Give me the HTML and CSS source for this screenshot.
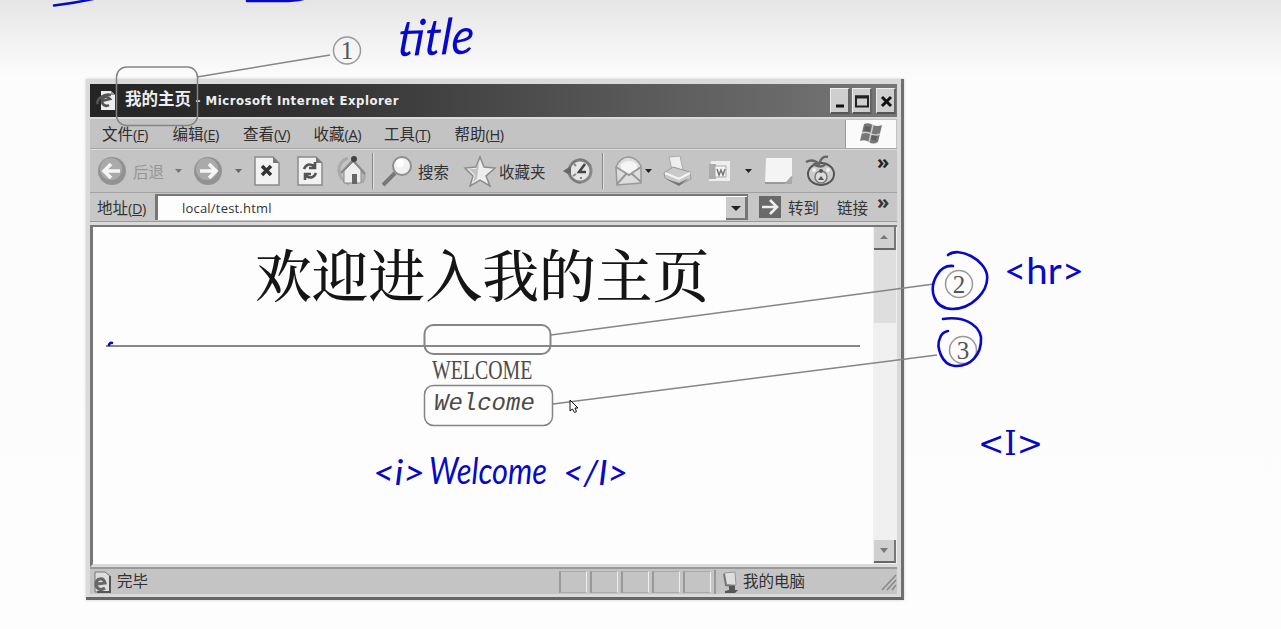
FILE: index.html
```html
<!DOCTYPE html>
<html lang="zh-CN">
<head>
<meta charset="utf-8">
<title>我的主页</title>
<link rel="stylesheet" href="styles.css">
</head>
<body>
<main class="slide">
  <section class="window">
    <header class="titlebar">
      <svg class="ie" width="21" height="21" viewBox="0 0 21 21"><path d="M5 1h10l4 4v15H5z" fill="#eee"/><path d="M15 1v4h4" fill="#999"/><path d="M13 15c-3 2-7 0-7-4s5-6 8-2l-8 2M2 14C-1 10 8 3 15 5" fill="none" stroke="#555" stroke-width="2.6"/></svg>
      <h1 class="title"><b>我的主页</b> - Microsoft Internet Explorer</h1>
      <div class="controls">
        <span class="ctl"><svg width="18" height="24"><path d="M5 17h8" stroke="#111" stroke-width="3"/></svg></span>
        <span class="ctl"><svg width="18" height="24"><path d="M3 7.500h12v10H3z" fill="none" stroke="#222" stroke-width="2"/><path d="M2 8h14" stroke="#222" stroke-width="3"/></svg></span>
        <span class="ctl close"><svg width="18" height="24"><path d="M5 8l9 9M14 8l-9 9" stroke="#111" stroke-width="3"/></svg></span>
      </div>
    </header>
    <nav class="menubar">
      <span>文件<i>(<u>F</u>)</i></span><span>编辑<i>(<u>E</u>)</i></span><span>查看<i>(<u>V</u>)</i></span><span>收藏<i>(<u>A</u>)</i></span><span>工具<i>(<u>T</u>)</i></span><span>帮助<i>(<u>H</u>)</i></span>
      <div class="brand"><svg width="26" height="24" viewBox="0 0 26 24"><path d="M6 2q5-2 9 1 4 2 9 0l-4 17q-5 3-9 0-4-3-9-1z" fill="#777"/><path d="M15 3l-4 17M4 11q5-2 9 1 4 2 9 0" stroke="#ccc" stroke-width="1.500" fill="none"/><path d="M7 4l6 1-1 5-6-1zM14 13l5 1-1 5-5-2z" fill="#555" opacity=".7"/></svg></div>
    </nav>
    <div class="toolbar">
      <svg width="30" height="32" viewBox="0 0 30 32"><circle cx="15" cy="16" r="14" fill="#929292"/><circle cx="14" cy="14" r="11" fill="#aaa"/><path d="M23 16H8M14 9l-7 7 7 7" fill="none" stroke="#f5f5f5" stroke-width="3.500"/></svg>
      <span class="off">后退</span>
      <svg width="8" height="8"><path d="M0 2h7L3.500 6z" fill="#777"/></svg>
      <svg width="30" height="32" viewBox="0 0 30 32"><circle cx="15" cy="16" r="14" fill="#929292"/><circle cx="14" cy="14" r="11" fill="#aaa"/><path d="M7 16h15M16 9l7 7-7 7" fill="none" stroke="#f5f5f5" stroke-width="3.500"/></svg>
      <svg width="8" height="8"><path d="M0 2h7L3.500 6z" fill="#666"/></svg>
      <svg width="26" height="30" viewBox="0 0 26 30"><path d="M1 1h18l6 6v22H1z" fill="#f2f2f2" stroke="#8a8a8a" stroke-width="1.500"/><path d="M19 1v6h6z" fill="#777"/><path d="M8 10l9 9M17 10l-9 9" stroke="#333" stroke-width="3.500"/></svg>
      <svg width="26" height="30" viewBox="0 0 26 30"><path d="M1 1h18l6 6v22H1z" fill="#f2f2f2" stroke="#8a8a8a" stroke-width="1.500"/><path d="M19 1v6h6z" fill="#777"/><path d="M7 13q3-7 10-3M18 6v6h-6M19 17q-3 7-10 3M8 24v-6h6" fill="none" stroke="#555" stroke-width="2.600"/></svg>
      <svg width="32" height="32" viewBox="0 0 32 32"><path d="M12 3Q2 7 3 17q2 9 10 12M25 15q6 5 1 13" fill="none" stroke="#aaa" stroke-width="3"/><path d="M8 16v12h17V14L17 7z" fill="#eee" stroke="#888"/><path d="M5 18L17 5l12 14" fill="none" stroke="#888" stroke-width="2"/><path d="M16 19h5v10h-5z" fill="#666"/><circle cx="18" cy="4" r="3" fill="#444"/></svg>
      <i class="sep"></i>
      <svg width="32" height="32" viewBox="0 0 32 32"><path d="M13 18L1 30" stroke="#777" stroke-width="4"/><circle cx="20" cy="11" r="9" fill="#f1f1f1" stroke="#8e8e8e" stroke-width="2"/><circle cx="18" cy="8" r="4" fill="#fff"/></svg>
      <span>搜索</span>
      <svg width="34" height="32" viewBox="0 0 34 32"><path d="M17 2l4 10 11 1-9 8 4 10-10-6-10 6 3-10-8-8 11-1z" fill="#eee" stroke="#8c8c8c" stroke-width="1.500"/><path d="M16 8l-3 6-7 0 6 6-2 7 4-3 1-8z" fill="#c2c2c2"/></svg>
      <span>收藏夹</span>
      <svg width="32" height="30" viewBox="0 0 32 30"><circle cx="18" cy="15" r="11" fill="#e5e5e5" stroke="#888" stroke-width="3"/><path d="M1 15l8-5v10z" fill="#666"/><path d="M9 9q10-12 20 1M7 17q4 10 12 10" fill="none" stroke="#777" stroke-width="1.500"/><path d="M23 8l-6 8h7" fill="none" stroke="#444" stroke-width="2.500"/><path d="M12 8l2 2M11 20l3-2M19 23v-2" stroke="#888" stroke-width="2"/></svg>
      <i class="sep"></i>
      <svg width="30" height="32" viewBox="0 0 30 32"><path d="M2 12Q6 2 15 2q8 1 12 9v17L3 30z" fill="#ddd" stroke="#999" stroke-width="1.500"/><path d="M7 9q8-6 16 0v8l-8 3-8-3z" fill="#f5f5f5"/><path d="M2 12l13 8 12-8M3 29l10-11M27 27L17 18" fill="none" stroke="#999" stroke-width="2"/></svg>
      <svg width="8" height="8"><path d="M0 2h7L3.500 6z" fill="#222"/></svg>
      <svg width="30" height="32" viewBox="0 0 30 32"><path d="M6 2l11-1 3 14H9z" fill="#eee" stroke="#aaa"/><path d="M1 18l9-6 17 5 1 7-12 6L2 23z" fill="#c9c9c9" stroke="#999"/><path d="M2 18l14 6 11-6" fill="none" stroke="#f5f5f5" stroke-width="2"/><path d="M3 24l13 4 10-5-10 8z" fill="#777"/></svg>
      <svg width="24" height="24" viewBox="0 0 24 24"><path d="M4 2h19v20H2z" fill="#eee"/><path d="M2 5h7v15H2z" fill="#aaa"/><path d="M8 7h11v11H8z" fill="#f6f6f6" stroke="#aaa"/><path d="M10 10l2 6 2-5 2 5 2-6" fill="none" stroke="#777" stroke-width="1.500"/></svg>
      <svg width="8" height="8"><path d="M0 2h7L3.500 6z" fill="#222"/></svg>
      <svg width="30" height="30" viewBox="0 0 30 30"><path d="M2 2h26v20l-5 6H1z" fill="#f4f4f4"/><path d="M1 27h22l5-6" fill="none" stroke="#999" stroke-width="2"/><path d="M28 20v8h-8z" fill="#aaa"/></svg>
      <svg width="32" height="32" viewBox="0 0 32 32"><ellipse cx="17" cy="19" rx="13" ry="11" fill="#ccc" stroke="#555" stroke-width="2"/><path d="M2 7q7-4 13 2 3-9 9-7M9 9q8 5 13 0" fill="none" stroke="#666" stroke-width="2.400"/><circle cx="17" cy="22" r="6" fill="#ddd" stroke="#777" stroke-width="1.500"/><circle cx="17" cy="16" r="2" fill="#555"/><path d="M14 25l3-4 3 4z" fill="#555"/><circle cx="10" cy="15" r="2" fill="#eee"/><circle cx="24" cy="15" r="2" fill="#eee"/></svg>
      <b class="more">»</b>
    </div>
    <div class="address">
      <label class="addr-label">地址<i>(<u>D</u>)</i></label>
      <div class="addr-field"><span>local/test.html</span><span class="drop"><svg width="20" height="22"><path d="M5 9h10l-5 5z" fill="#222"/></svg></span></div>
      <svg class="go" width="22" height="22" viewBox="0 0 22 22"><path d="M0 0h22v22H0z" fill="#696969"/><path d="M3 11h15M11 4l7 7-7 7" fill="none" stroke="#eee" stroke-width="2.600"/></svg>
      <span class="go-text">转到</span>
      <span class="links">链接</span>
      <b class="more2">»</b>
    </div>
    <div class="viewport">
      <article class="page">
        <h2>欢迎进入我的主页</h2>
        <hr>
        <p class="upper"><span>WELCOME</span></p>
        <p class="lower"><i>Welcome</i></p>
      </article>
      <aside class="scroll">
        <span class="sb"><svg width="20" height="20"><path d="M6 12h8l-4-4z" fill="#777"/></svg></span>
        <span class="thumb"></span>
        <span class="sb"><svg width="20" height="20"><path d="M6 8h8l-4 5z" fill="#777"/></svg></span>
      </aside>
    </div>
    <footer class="status">
      <div class="done"><svg width="22" height="24" viewBox="0 0 22 24"><path d="M5 2h10l5 4v16H5z" fill="#ddd" stroke="#777"/><path d="M20 6v16H7" fill="none" stroke="#555" stroke-width="2"/><path d="M15 18c-4 3-9 1-9-4s7-8 9-1l-8 1" fill="none" stroke="#666" stroke-width="3"/></svg><span>完毕</span></div>
      <i></i><i></i><i></i><i></i><i></i>
      <div class="zone"><svg width="18" height="24" viewBox="0 0 18 24"><path d="M3 3l11-1 1 13-10 1z" fill="#ddd" stroke="#999"/><path d="M3 4l2 11 9 1" fill="none" stroke="#777" stroke-width="2"/><path d="M8 16h6v4h3l-3 3H4v-2l4-1z" fill="#555"/></svg><span>我的电脑</span></div>
      <svg class="grip" width="16" height="18"><path d="M1 17L15 2M6 17l9-10M11 17l4-5" stroke="#888" stroke-width="1.500"/></svg>
    </footer>
  </section>

  <svg class="marks" width="1281" height="629" viewBox="0 0 1281 629">
    <g fill="none" stroke="#858585" stroke-width="1.500">
      <rect x="116.500" y="67" width="81" height="58.500" rx="10"/>
      <path d="M197 77L330 55"/>
      <rect x="424.500" y="325" width="126" height="29" rx="9" stroke-width="2"/>
      <path d="M551 335L934 284"/>
      <rect x="424.500" y="385.500" width="128" height="40" rx="9"/>
      <path d="M553 404L937 355"/>
    </g>
    <g fill="none" stroke="#999" stroke-width="1.500"><circle cx="347" cy="50.500" r="13.500"/><circle cx="959" cy="284" r="13.500"/><circle cx="963" cy="350" r="13.500"/></g>
    <g class="num"><text x="347" y="59">1</text><text x="959" y="292.500">2</text><text x="963" y="358.500">3</text></g>
    <g fill="none" stroke="#0808c8" stroke-width="2.600" stroke-linecap="round">
      <path d="M54 5.500Q75 3 93-1M247 1h35Q295 1 303-1"/>
      <path d="M948 255C959 246 985 260 987 275C989 291 972 309 952 309C932 308 929 288 937 275Q943 265 953 266"/>
      <path d="M943 319C962 316 978 323 981 337C982 355 970 367 955 366C941 365 936 346 940 338Q942 332 948 331"/>
      <path d="M109 345q1-3 3-2"/>
    </g>
    <g class="ink">
      <text x="0" y="0" textLength="76" lengthAdjust="spacingAndGlyphs" transform="translate(397 56) rotate(-2) skewX(-6)" font-size="50">title</text>
      <text class="upright" x="1004" y="284" textLength="80" lengthAdjust="spacingAndGlyphs" font-size="37">&lt;hr&gt;</text>
      <text class="serif" x="978" y="455" textLength="65" lengthAdjust="spacingAndGlyphs" font-size="34">&lt;I&gt;</text>
      <text x="373" y="485" textLength="52" lengthAdjust="spacingAndGlyphs" font-size="34">&lt;i&gt;</text>
      <text x="0" y="0" textLength="118" lengthAdjust="spacingAndGlyphs" transform="translate(429 484)" font-size="37">Welcome</text>
      <text x="563" y="485" textLength="65" lengthAdjust="spacingAndGlyphs" font-size="35">&lt;/I&gt;</text>
    </g>
    <path d="M570 400v11l2.500-2 2 3.500 2-1-1.500-3.500h3z" fill="#fff" stroke="#111"/>
  </svg>
</main>
</body>
</html>
```

FILE: styles.css
```css
* { box-sizing: border-box; }
body { margin: 0; overflow: hidden; font-family: "Open Sans", "Noto Sans CJK SC", sans-serif; }
.slide { position: relative; width: 1281px; height: 629px; padding: 79px 0 0 86px; background: linear-gradient(#e5e5e5 0, #efefef 30px, #fcfcfc 78px, #fdfdfd 100%); }
.slide svg { display: block; flex: none; }
.window { display: flex; flex-direction: column; width: 818px; height: 521px; padding: 5px 4px 0 4px; background: #dadada; border-right: 3px solid #707070; border-bottom: 3px solid #666; box-shadow: 0 0 3px #ccc; }
.titlebar { display: flex; align-items: center; height: 33px; padding-left: 6px; background: linear-gradient(90deg, #242424, #303030 25%, #525252 60%, #777); color: #eee; }
.title { flex: 1; margin: 0 0 0 8px; font: 700 13px/33px "DejaVu Sans Condensed", "DejaVu Sans", "Noto Sans CJK SC", sans-serif; font-stretch: condensed; letter-spacing: .52px; white-space: nowrap; }
.title b { font: 700 16.500px "Noto Sans CJK SC", sans-serif; letter-spacing: 0; }
.controls { display: flex; gap: 2px; padding-right: 1px; }
.ctl { width: 20px; height: 26px; background: #cecece; border: 1px solid #eee; border-right: 2px solid #666; border-bottom: 2px solid #555; }
.ctl.close { margin-left: 2px; }
.menubar { display: flex; height: 32px; padding-left: 12px; background: #c3c3c3; border-top: 2px solid #dadada; border-bottom: 1px solid #a5a5a5; font-size: 15.500px; line-height: 31px; color: #2e2e2e; }
.menubar > span { width: 70.500px; white-space: nowrap; }
.menubar i, .address i { font: 14.500px "Open Sans", sans-serif; letter-spacing: -.4px; }
.brand { display: flex; align-items: center; justify-content: center; width: 51px; margin: 1px 1px 0 auto; background: #fafafa; border-left: 1px solid #999; }
.toolbar { display: grid; align-items: center; height: 44px; grid-template-columns: 36px 42px 18px 42px 19px 43px 39px 36px 10px 36px 45px 36px 63px 40px 12px 31px 18px 44px 38px 19px 40px 73px 18px; padding-left: 7px; background: #c4c4c4; border-top: 1px solid #dedede; border-bottom: 1px solid #a2a2a2; font-size: 15.500px; color: #333; white-space: nowrap; }
.toolbar .off { color: #969696; }
.sep { width: 2px; height: 36px; border-left: 1px solid #888; border-right: 1px solid #e1e1e1; }
.more { margin-top: -18px; font-size: 20px; line-height: 24px; color: #222; }
.address { display: flex; align-items: center; height: 29px; padding-left: 7px; background: #c7c7c7; border-bottom: 1px solid #999; font-size: 15.500px; color: #333; white-space: nowrap; }
.addr-label { width: 58px; }
.addr-field { display: flex; align-items: center; justify-content: space-between; width: 593px; height: 26px; padding-left: 24px; background: #fdfdfd; border: 2px solid #777; border-bottom: 0; border-right-width: 1px; border-left-width: 3px; font: 13px "Open Sans", sans-serif; letter-spacing: .2px; }
.drop { width: 21px; height: 23px; background: #cbcbcb; border-right: 2px solid #777; border-bottom: 2px solid #777; }
.go { margin-left: 11px; }
.go-text { width: 48px; margin-left: 7px; }
.links { width: 41px; padding-left: 1px; }
.more2 { margin-top: -11px; font-size: 20px; line-height: 20px; }
.viewport { display: flex; height: 342px; margin-top: 3px; background: #fdfdfd; border-top: 2px solid #777; border-left: 3px solid #777; border-bottom: 3px solid #dadada; }
.page { width: 780px; padding-top: 1px; }
.page h2 { margin: 0 0 0 162px; font: 500 56.800px/90px "Noto Serif CJK SC", "Noto Sans CJK SC", serif; color: #151515; white-space: nowrap; }
.page hr { width: 754px; height: 2px; margin: 27px 0 0 13px; border: 0; background: #888; }
.page p { margin: 0; color: #4b4b4b; }
.upper { height: 38px; padding: 8px 0 0 339px; font: 27px/31px "Liberation Serif", serif; }
.upper span { display: inline-block; transform: scaleX(.735); transform-origin: 0 0; }
.lower { padding-left: 341px; font: 24px/37px "Liberation Mono", monospace; }
.scroll { display: flex; flex-direction: column; width: 24px; background: #f0f0f0; padding: 0 1px 1px; }
.sb { width: 22px; height: 23px; background: #d0d0d0; border-right: 2px solid #777; border-bottom: 2px solid #666; }
.thumb { height: 73px; margin-bottom: auto; background: #dedede; }
.status { display: flex; align-items: center; height: 27px; border-top: 2px solid #999; background: #c4c4c4; font-size: 15.500px; line-height: 22px; color: #303030; }
.status > i { width: 28px; height: 22px; margin-right: 3px; border: 1px solid #aaa; border-left: 2px solid #999; border-right-color: #eee; }
.done { display: flex; gap: 5px; width: 469px; }
.zone { display: flex; gap: 4px; flex: 1; height: 24px; padding-left: 5px; border-left: 2px solid #999; }
.slide .marks { position: absolute; inset: 0; }
.num { font: 25px "Liberation Serif", serif; fill: #555; text-anchor: middle; }
.ink { font-family: Lato, sans-serif; font-style: italic; fill: #0808c8; }
.ink .upright { font-style: normal; }
.ink .serif { font-family: "DejaVu Serif", serif; font-style: normal; }
```
